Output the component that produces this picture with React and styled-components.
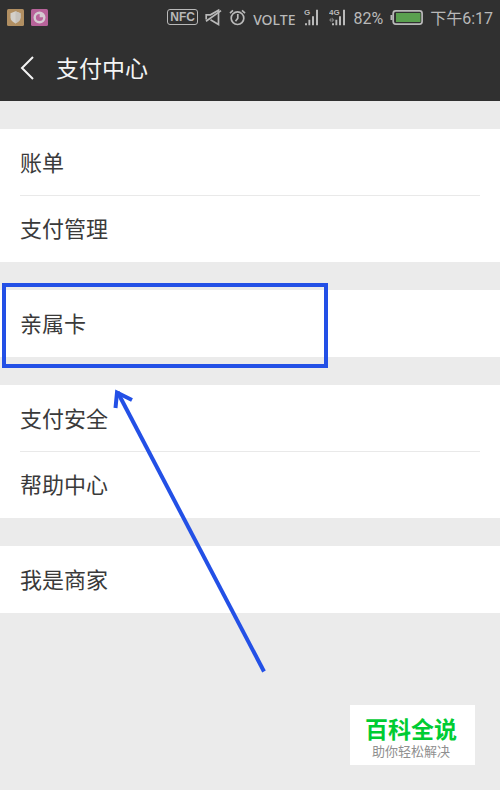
import React from "react";
import styled, { createGlobalStyle } from "styled-components";

const colors = {
  bar: "#303030",
  page: "#ebebeb",
  text: "#3a3a3a",
  status: "#b9b9b9",
  mark: "#2350e6",
  brand: "#00cc33",
};

const GlobalStyle = createGlobalStyle`
  * {
    box-sizing: border-box;
  }

  body {
    margin: 0;
    background: ${colors.page};
    font-family: Roboto, "Noto Sans CJK SC", sans-serif;
    color: ${colors.text};
  }
`;

const Screen = styled.div`
  position: relative;
  min-height: 100vh;
`;

const TopBar = styled.header`
  background: ${colors.bar};
`;

const StatusBar = styled.div`
  display: flex;
  align-items: center;
  justify-content: space-between;
  height: 34px;
  padding: 0 7px;
  color: ${colors.status};
  font-size: 16px;
  white-space: nowrap;

  svg {
    display: block;
    flex: none;
  }
`;

const StatusGroup = styled.div`
  display: flex;
  align-items: center;
  gap: ${(props) => props.$gap}px;
`;

const NfcTag = styled.span`
  width: 31px;
  height: 16px;
  border: 1px solid ${colors.status};
  border-radius: 3px;
  font-family: "Liberation Sans", sans-serif;
  font-size: 12px;
  font-weight: 700;
  line-height: 14px;
  text-align: center;
`;

const StatusText = styled.span`
  padding-top: 3px;
  line-height: 20px;
`;

const Network = styled.span`
  padding-top: 5px;
  font-family: "Noto Sans", sans-serif;
  font-size: 14px;
  font-weight: 500;
  line-height: 16px;
`;

const TitleBar = styled.div`
  display: flex;
  align-items: center;
  gap: 20px;
  height: 67px;
  padding: 0 20px;
`;

const BackButton = styled.button`
  display: flex;
  padding: 0;
  border: 0;
  background: none;
  cursor: pointer;
`;

const Title = styled.h1`
  margin: 0;
  padding-top: 4px;
  color: #f4f4f4;
  font-size: 23px;
  font-weight: 400;
  line-height: 32px;
`;

const Menu = styled.main`
  display: flex;
  flex-direction: column;
  gap: 28px;
  padding: 28px 0;
`;

const Section = styled.section`
  position: relative;
  padding: 0 20px;
  background: #ffffff;
`;

const Row = styled.button`
  display: block;
  width: 100%;
  height: 67px;
  padding: 2px 0 0;
  border: 0;
  background: none;
  color: inherit;
  font-family: inherit;
  font-size: 22px;
  line-height: 32px;
  text-align: left;
  cursor: pointer;

  & + & {
    margin-top: -1px;
    border-top: 1px solid #e9e9e9;
  }
`;

const Highlight = styled.div`
  position: absolute;
  z-index: 1;
  top: -7px;
  left: 2px;
  width: 326px;
  height: 85px;
  border: 4px solid ${colors.mark};
  pointer-events: none;
`;

const Arrow = styled.svg`
  position: absolute;
  z-index: 1;
  top: 96px;
  left: 108px;
  pointer-events: none;
`;

const Badge = styled.aside`
  position: absolute;
  right: 25px;
  bottom: 25px;
  width: 125px;
  padding: 13px 3px 5px 0;
  background: #ffffff;
  text-align: center;
`;

const BadgeName = styled.strong`
  display: block;
  color: ${colors.brand};
  font-size: 23px;
  font-weight: 700;
  line-height: 26px;
`;

const BadgeNote = styled.span`
  display: block;
  color: #8f8f8f;
  font-size: 13px;
  line-height: 16px;
`;

const ShieldIcon = () => (
  <svg width="17" height="17" viewBox="0 0 17 17">
    <rect width="17" height="17" rx="1.5" fill="#b18f62" />
    <path d="M8.5 2.3 13.5 4.2V8.5C13.5 11.3 11.2 13.2 8.5 14.4 5.8 13.2 3.5 11.3 3.5 8.5V4.2Z" fill="#d4d0ca" />
    <path d="M8.5 2.3 13.5 4.2V8.5C13.5 11.3 11.2 13.2 8.5 14.4Z" fill="#c6c2bc" />
  </svg>
);

const CircleIcon = () => (
  <svg width="17" height="17" viewBox="0 0 17 17" fill="none">
    <rect width="17" height="17" rx="1.5" fill="#b8639a" />
    <circle cx="8.5" cy="8.5" r="4.8" stroke="#d4cbd1" strokeWidth="2.4" />
    <path d="M8.7 4.5V8.3H12.5A3.8 3.8 0 0 0 8.7 4.5Z" fill="#d4cbd1" />
  </svg>
);

const MuteIcon = () => (
  <svg width="17" height="17" viewBox="0 0 17 17" fill="none" stroke={colors.status} strokeWidth="1.7">
    <path d="M1.2 10.5V5.8H5.5L13.5 1.2V15.5L5.5 10.8" />
    <path d="M1 12.3 16 1.6" />
  </svg>
);

const AlarmIcon = () => (
  <svg width="17" height="17" viewBox="0 0 17 17" fill="none" stroke={colors.status} strokeWidth="1.7">
    <circle cx="8.5" cy="9.2" r="6.3" />
    <path d="M8.8 5V9.2L6.5 12.2M1 4.2 4 1.3M16 4.2 13 1.3" />
  </svg>
);

const SignalIcon = ({ label, dimmed }) => (
  <svg width="17" height="17" viewBox="0 0 17 17" fill={colors.status}>
    <text
      x={label.length > 1 ? 0 : 2}
      y="6"
      fontFamily="Liberation Sans, sans-serif"
      fontSize="8"
      fontWeight="700"
    >
      {label}
    </text>
    {dimmed && <path d="M0 11 2.5 8.5V13.5ZM5.5 11 3 8.5V13.5Z" fill="#777777" />}
    <path d="M3 14.2h2v2H3zM6.4 10.7h1.9v5.5H6.4zM10 7.2h2v9h-2zM14 .8h2v15.4h-2z" />
  </svg>
);

const BatteryIcon = () => (
  <svg width="33" height="15" viewBox="0 0 33 15" fill="none">
    <path d="M1.5 5V10" stroke={colors.status} strokeWidth="2" />
    <rect x="3.2" y="0.9" width="28.9" height="13.2" rx="2.5" stroke={colors.status} strokeWidth="1.7" />
    <rect x="6" y="3" width="24.5" height="9" fill="#5aa04f" />
  </svg>
);

const menu = [
  [{ name: "账单" }, { name: "支付管理" }],
  [{ name: "亲属卡", marked: true }],
  [{ name: "支付安全" }, { name: "帮助中心" }],
  [{ name: "我是商家" }],
];

const App = () => (
  <>
    <GlobalStyle />
    <Screen>
      <TopBar>
        <StatusBar>
          <StatusGroup $gap={7}>
            <ShieldIcon />
            <CircleIcon />
          </StatusGroup>
          <StatusGroup $gap={7}>
            <NfcTag>NFC</NfcTag>
            <MuteIcon />
            <AlarmIcon />
            <Network>VOLTE</Network>
            <StatusGroup $gap={10}>
              <SignalIcon label="G" />
              <SignalIcon label="4G" dimmed />
            </StatusGroup>
            <StatusText>82%</StatusText>
            <BatteryIcon />
            <StatusText>下午6:17</StatusText>
          </StatusGroup>
        </StatusBar>
        <TitleBar>
          <BackButton aria-label="返回">
            <svg width="16" height="26" viewBox="0 0 16 26" fill="none" stroke="#f4f4f4" strokeWidth="2">
              <path d="M13 2 2 13 13 24" />
            </svg>
          </BackButton>
          <Title>支付中心</Title>
        </TitleBar>
      </TopBar>

      <Menu>
        {menu.map((rows) => (
          <Section key={rows[0].name}>
            {rows.map((row) => (
              <React.Fragment key={row.name}>
                <Row>{row.name}</Row>
                {row.marked && (
                  <>
                    <Highlight />
                    <Arrow width="164" height="292" viewBox="0 0 164 292" fill="none" stroke={colors.mark} strokeWidth="4">
                      <path d="M9.5 6 156 285.5" />
                      <path d="M7.5 22 9 6.5 24 14" />
                    </Arrow>
                  </>
                )}
              </React.Fragment>
            ))}
          </Section>
        ))}
      </Menu>

      <Badge>
        <BadgeName>百科全说</BadgeName>
        <BadgeNote>助你轻松解决</BadgeNote>
      </Badge>
    </Screen>
  </>
);

export default App;
